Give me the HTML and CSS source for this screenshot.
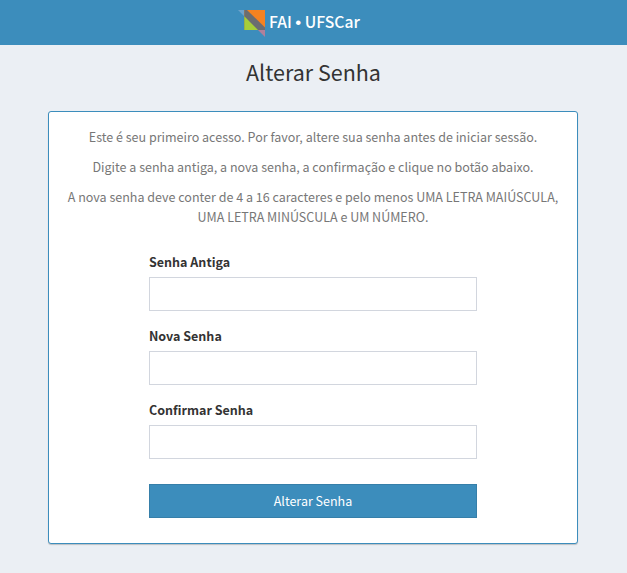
FILE: index.html
```html
<!DOCTYPE html>
<html lang="pt-BR">
<head>
<meta charset="utf-8">
<title>Alterar Senha</title>
<link rel="stylesheet" href="styles.css">
</head>
<body>
<header class="navbar">
  <svg class="logo" width="27" height="27" viewBox="0 0 27 27" aria-hidden="true">
    <path fill="#6ea3cc" d="M0 0H6.5V6.5Z"/>
    <path fill="#b0809a" d="M20 20H27V27Z"/>
    <path fill="#f58220" d="M6.3 0H27V20H6.3Z"/>
    <path fill="#6b6d70" d="M6.3 0H9L27 17.5V20H6.3Z"/>
    <path fill="#a6ce39" d="M6.3 6.3V20H20Z"/>
  </svg>
  <span class="brand">FAI <span class="dot">•</span> UFSCar</span>
</header>
<main>
  <h1 class="title">Alterar Senha</h1>
  <section class="card">
    <p class="msg">Este é seu primeiro acesso. Por favor, altere sua senha antes de iniciar sessão.</p>
    <p class="msg">Digite a senha antiga, a nova senha, a confirmação e clique no botão abaixo.</p>
    <p class="msg">A nova senha deve conter de 4 a 16 caracteres e pelo menos UMA LETRA MAIÚSCULA,<br>UMA LETRA MINÚSCULA e UM NÚMERO.</p>
    <form class="form">
      <label class="label" for="antiga">Senha Antiga</label>
      <input class="field" id="antiga" type="password">
      <label class="label" for="nova">Nova Senha</label>
      <input class="field" id="nova" type="password">
      <label class="label" for="confirmar">Confirmar Senha</label>
      <input class="field" id="confirmar" type="password">
      <button class="submit" type="button">Alterar Senha</button>
    </form>
  </section>
</main>
</body>
</html>
```
FILE: styles.css
```css
* { box-sizing: border-box; }
body {
  margin: 0;
  min-height: 573px;
  background: #ebeff4;
  color: #333;
  font-family: "Source Sans Pro", "Noto Sans CJK SC", sans-serif;
  font-size: 12.53px;
  line-height: 20px;
}
.navbar {
  display: flex;
  height: 45px;
  padding: 10px 0 0 238px;
  background: #3c8dbc;
}
.brand {
  height: 24px;
  margin: 0 0 0 4px;
  color: #fff;
  font-size: 15.7px;
  font-weight: 500;
  line-height: 24px;
  white-space: nowrap;
}
.dot {
  font-family: "Liberation Sans", sans-serif;
  font-size: 17px;
  line-height: 1;
}
.title {
  margin: 12px 0 24px;
  font-size: 21.5px;
  font-weight: 400;
  line-height: 30px;
  text-align: center;
}
.card {
  width: 530px;
  height: 433px;
  margin: 0 0 0 48px;
  padding: 15px 15px 0;
  background: #fff;
  border: 1px solid #3c8dbc;
  border-radius: 3px;
  box-shadow: 0 1px 1px rgba(0, 0, 0, .2);
}
.msg {
  margin: 0 0 10px;
  color: #777;
  text-align: center;
  white-space: nowrap;
}
.form {
  width: 328px;
  margin: 25px 0 0 85px;
}
.label {
  display: block;
  margin-bottom: 5px;
  font-weight: 700;
}
.field {
  display: block;
  width: 100%;
  height: 34px;
  margin: 0 0 15px;
  border: 1px solid #d2d6de;
  background: #fff;
}
.submit {
  display: block;
  width: 100%;
  height: 34px;
  margin-top: 25px;
  padding: 0;
  border: 1px solid #367fa9;
  background: #3c8dbc;
  color: #fff;
  font: inherit;
}
```
